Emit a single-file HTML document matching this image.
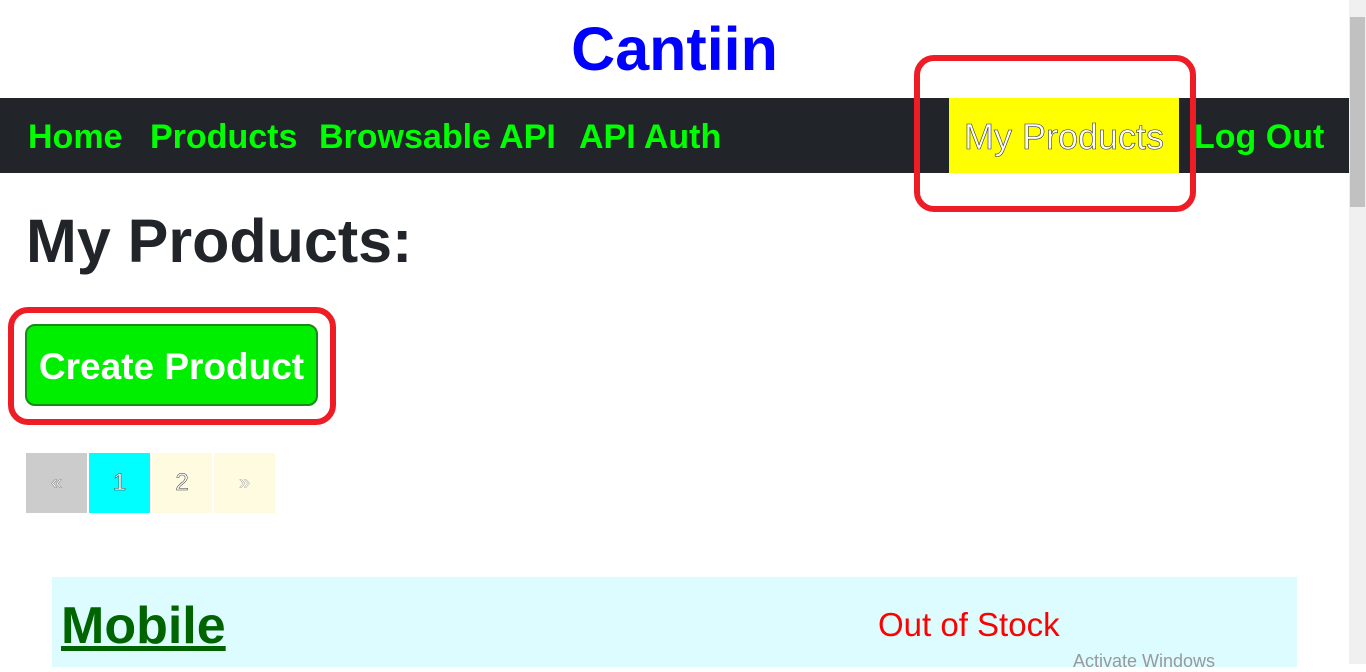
<!DOCTYPE html>
<html><head><style>
*{margin:0;padding:0;box-sizing:border-box}
body{width:1366px;height:664px;overflow:hidden;background:#fff;font-family:"Segoe UI","Liberation Sans",sans-serif;position:relative}
.a{position:absolute;white-space:nowrap}
.n{font-size:34px;font-weight:bold;color:#00ff00;line-height:42px;top:116px}
</style></head><body>
<div class="a" style="left:0;top:14px;width:1349px;text-align:center;font-size:61px;font-weight:bold;color:#0000ff;line-height:70px">Cantiin</div>
<div class="a" style="left:0;top:98px;width:1349px;height:75px;background:#212529"></div>
<div class="a n" style="left:28px">Home</div>
<div class="a n" style="left:150px">Products</div>
<div class="a n" style="left:319px">Browsable API</div>
<div class="a n" style="left:579px">API Auth</div>
<div class="a" style="left:949px;top:98px;width:230px;height:75px;background:#ffff00"></div>
<div class="a" style="left:949px;top:116px;width:230px;text-align:center;font-size:36px;color:#fff;line-height:42px;-webkit-text-stroke:0.6px #333">My Products</div>
<div class="a n" style="left:1194px">Log Out</div>
<div class="a" style="left:914px;top:55px;width:282px;height:157px;border:6px solid #ee1c25;border-radius:20px"></div>
<div class="a" style="left:26px;top:206px;font-size:61px;font-weight:bold;color:#212529;line-height:70px">My Products:</div>
<div class="a" style="left:8px;top:307px;width:328px;height:118px;border:6px solid #ee1c25;border-radius:20px"></div>
<div class="a" style="left:25px;top:324px;width:293px;height:82px;background:#00ee00;border:2px solid #1a8a1a;border-radius:10px;color:#fff;font-size:37px;font-weight:bold;text-align:center;line-height:82px">Create Product</div>
<div class="a" style="left:26px;top:453px;width:61px;height:60px;background:#cccccc;text-align:center;line-height:60px;font-size:20px;color:#fff;-webkit-text-stroke:0.3px #333">«</div>
<div class="a" style="left:89px;top:453px;width:61px;height:60px;background:#00ffff;text-align:center;line-height:60px;font-size:24px;color:#fff;-webkit-text-stroke:0.5px #333">1</div>
<div class="a" style="left:152px;top:453px;width:60px;height:60px;background:#fffbe0;text-align:center;line-height:60px;font-size:24px;color:#fff;-webkit-text-stroke:0.5px #333">2</div>
<div class="a" style="left:214px;top:453px;width:61px;height:60px;background:#fffbe0;text-align:center;line-height:60px;font-size:20px;color:#fff;-webkit-text-stroke:0.3px #666">»</div>
<div class="a" style="left:52px;top:577px;width:1245px;height:90px;background:#dcfcff"></div>
<div class="a" style="left:61px;top:594px;font-size:52px;font-weight:bold;color:#006400;text-decoration:underline;line-height:64px">Mobile</div>
<div class="a" style="left:878px;top:605px;font-size:33px;color:#ff0000;line-height:40px">Out of Stock</div>
<div class="a" style="left:1073px;top:650px;font-size:18px;color:#999;line-height:22px">Activate Windows</div>
<div class="a" style="left:1349px;top:0;width:17px;height:664px;background:#f0f0f0"></div>
<div class="a" style="left:1350px;top:17px;width:15px;height:190px;background:#c1c1c1"></div>
</body></html>
